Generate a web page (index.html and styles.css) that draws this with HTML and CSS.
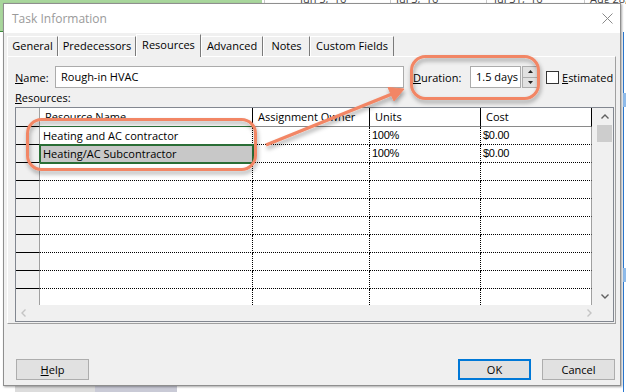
FILE: index.html
```html
<!DOCTYPE html>
<html lang="en">
<head>
    <meta charset="UTF-8">
    <meta name="viewport" content="width=device-width, initial-scale=1.0">
    <title>Task Information</title>
    <link rel="stylesheet" href="styles.css">
</head>
<body>
    <!-- Project window behind the dialog -->
    <div class="desk-green"></div>
    <div class="scale-line" style="left:264px"></div>
    <div class="scale-line" style="left:390px"></div>
    <div class="scale-line" style="left:486px"></div>
    <div class="scale-line" style="left:584px"></div>
    <span class="scale-date" style="left:300px">Jun 5, '16</span>
    <span class="scale-date" style="left:396px">Jul 3, '16</span>
    <span class="scale-date" style="left:494px">Jul 31, '16</span>
    <span class="scale-date" style="left:590px">Aug 28, '16</span>
    <div class="desk-blue"></div>
    <div class="desk-mark" style="top:93px"></div>
    <div class="desk-mark" style="top:268px"></div>
    <div class="desk-foot">
        <div class="foot-a"></div>
        <div class="foot-b"></div>
    </div>

    <div class="dialog">
        <div class="titlebar">
            <span class="title">Task Information</span>
            <svg class="close" width="11" height="11" viewBox="0 0 11 11">
                <path d="M0.5 0.5 L10.5 10.5 M10.5 0.5 L0.5 10.5" stroke="#8a8a8a" stroke-width="1" fill="none"/>
            </svg>
        </div>
        <div class="client">
            <div class="tabs">
                <div class="tab" style="width:51px">General</div>
                <div class="tab" style="width:78px">Predecessors</div>
                <div class="tab tab-on" style="width:65px">Resources</div>
                <div class="tab" style="width:62px">Advanced</div>
                <div class="tab" style="width:47px">Notes</div>
                <div class="tab" style="width:84px">Custom Fields</div>
            </div>
            <div class="panel">
                <div class="field-row">
                    <span class="lbl name-lbl"><u>N</u>ame:</span>
                    <div class="textbox name-box">Rough-in HVAC</div>
                    <span class="lbl dur-lbl"><u>D</u>uration:</span>
                    <div class="textbox dur-box">1.5 days</div>
                    <div class="spinner">
                        <div class="spin-btn">
                            <svg width="5" height="3" viewBox="0 0 5 3"><path d="M0 3 L2.5 0 L5 3 Z" fill="#222"/></svg>
                        </div>
                        <div class="spin-btn">
                            <svg width="5" height="3" viewBox="0 0 5 3"><path d="M0 0 L2.5 3 L5 0 Z" fill="#222"/></svg>
                        </div>
                    </div>
                    <div class="checkbox"></div>
                    <span class="lbl est-lbl"><u>E</u>stimated</span>
                </div>
                <div class="lbl res-lbl"><u>R</u>esources:</div>
                <div class="grid">
                    <div class="grid-main">
                        <div class="grid-view">
                            <div class="rh"></div>
                            <div class="hd hd-focus">Resource Name</div>
                            <div class="hd">Assignment Owner</div>
                            <div class="hd">Units</div>
                            <div class="hd">Cost</div>

                            <div class="rh"></div>
                            <div class="cell name">Heating and AC contractor</div>
                            <div class="cell"></div>
                            <div class="cell num">100%</div>
                            <div class="cell num last">$0.00</div>

                            <div class="rh"></div>
                            <div class="cell name sel">Heating/AC Subcontractor</div>
                            <div class="cell"></div>
                            <div class="cell num">100%</div>
                            <div class="cell num last">$0.00</div>

                            <div class="rh"></div><div class="cell"></div><div class="cell"></div><div class="cell"></div><div class="cell last"></div>
                            <div class="rh"></div><div class="cell"></div><div class="cell"></div><div class="cell"></div><div class="cell last"></div>
                            <div class="rh"></div><div class="cell"></div><div class="cell"></div><div class="cell"></div><div class="cell last"></div>
                            <div class="rh"></div><div class="cell"></div><div class="cell"></div><div class="cell"></div><div class="cell last"></div>
                            <div class="rh"></div><div class="cell"></div><div class="cell"></div><div class="cell"></div><div class="cell last"></div>
                            <div class="rh"></div><div class="cell"></div><div class="cell"></div><div class="cell"></div><div class="cell last"></div>
                            <div class="rh"></div><div class="cell"></div><div class="cell"></div><div class="cell"></div><div class="cell last"></div>
                            <div class="rh"></div><div class="cell"></div><div class="cell"></div><div class="cell"></div><div class="cell last"></div>
                        </div>
                        <div class="vscroll">
                            <div class="vbar">
                                <div class="vbtn">
                                    <svg width="8" height="5" viewBox="0 0 8 5"><path d="M0.5 4.5 L4 1 L7.5 4.5" stroke="#606060" stroke-width="1.4" fill="none"/></svg>
                                </div>
                                <div class="thumb"></div>
                                <div class="vbtn vbtn-down">
                                    <svg width="8" height="5" viewBox="0 0 8 5"><path d="M0.5 0.5 L4 4 L7.5 0.5" stroke="#606060" stroke-width="1.4" fill="none"/></svg>
                                </div>
                            </div>
                        </div>
                    </div>
                    <div class="hscroll">
                        <svg width="5" height="8" viewBox="0 0 5 8"><path d="M4.5 0.5 L1 4 L4.5 7.5" stroke="#c4c4c4" stroke-width="1.4" fill="none"/></svg>
                        <svg width="5" height="8" viewBox="0 0 5 8"><path d="M0.5 0.5 L4 4 L0.5 7.5" stroke="#c4c4c4" stroke-width="1.4" fill="none"/></svg>
                    </div>
                </div>
            </div>
            <div class="buttons">
                <div class="btn"><span><u>H</u>elp</span></div>
                <div class="spacer"></div>
                <div class="btn btn-default">OK</div>
                <div class="btn btn-cancel">Cancel</div>
            </div>
        </div>
    </div>

    <!-- Callout annotations drawn over the screenshot -->
    <svg class="callouts" width="626" height="392" viewBox="0 0 626 392">
        <defs>
            <filter id="drop" x="-20%" y="-30%" width="140%" height="170%">
                <feDropShadow dx="1" dy="3" stdDeviation="2" flood-color="#000" flood-opacity="0.35"/>
            </filter>
        </defs>
        <g filter="url(#drop)" stroke="#f28665" fill="none" stroke-width="3">
            <rect x="27.5" y="119.5" width="228" height="50" rx="14"/>
            <rect x="411.5" y="56.5" width="127" height="42" rx="14"/>
            <path d="M266 145 L392 94" stroke-width="3.5"/>
            <path d="M404 89 L388 87.5 L394 101 Z" fill="#f28665" stroke-width="1"/>
        </g>
    </svg>
</body>
</html>
```

FILE: styles.css
```css
* {
    box-sizing: border-box;
}

body {
    margin: 0;
    width: 626px;
    height: 392px;
    overflow: hidden;
    position: relative;
    background: #fff;
    font-family: "Open Sans", "Noto Sans", sans-serif;
    font-size: 11px;
    color: #000;
}

/* Backdrop: the project window */
.desk-green {
    position: absolute;
    left: 0;
    top: 0;
    width: 262px;
    height: 32px;
    background: #a8d69c;
    border-bottom: 1px solid #3d8a3d;
}

.scale-line {
    position: absolute;
    top: 0;
    width: 1px;
    height: 6px;
    background: #c8c8c8;
}

.scale-date {
    position: absolute;
    top: -9px;
    font-size: 11px;
    color: #444;
    white-space: nowrap;
}

.desk-blue {
    position: absolute;
    left: 623px;
    top: 32px;
    width: 1px;
    height: 360px;
    background: #2b78d0;
}

.desk-mark {
    position: absolute;
    left: 623px;
    width: 3px;
    height: 14px;
    background: #8fbbea;
}

.desk-foot {
    position: absolute;
    left: 0;
    top: 386px;
    width: 626px;
    height: 6px;
    display: flex;
    padding-left: 15px;
}

.foot-a {
    width: 80px;
    background: #dcdcdc;
}

.foot-b {
    width: 82px;
    background: #c9cad6;
}

/* Dialog window */
.dialog {
    position: absolute;
    left: 3px;
    top: 3px;
    width: 618px;
    height: 383px;
    border: 1px solid #8f8f8f;
    background: #f0f0f0;
    box-shadow: 1px 1px 2px rgba(0, 0, 0, 0.35);
    display: flex;
    flex-direction: column;
}

.titlebar {
    height: 29px;
    background: #fff;
    display: flex;
    align-items: center;
    justify-content: space-between;
    padding: 0 7px 0 8px;
}

.title {
    font-size: 12px;
    color: #9a9a9a;
}

.close {
    display: block;
}

.client {
    flex: 1;
    display: flex;
    flex-direction: column;
    padding: 1px 4px 5px 3px;
}

/* Tabs */
.tabs {
    display: flex;
    align-items: flex-end;
    height: 22px;
    position: relative;
    z-index: 1;
}

.tab {
    height: 20px;
    line-height: 18px;
    text-align: center;
    white-space: nowrap;
    border-top: 1px solid #fff;
    border-left: 1px solid #fff;
    border-right: 1px solid #7a7a7a;
    background: #f0f0f0;
}

.tab-on {
    height: 23px;
    line-height: 20px;
    margin-bottom: -1px;
    background: #f0f0f0;
}

.panel {
    height: 268px;
    border: 1px solid;
    border-color: #fff #a0a0a0 #a0a0a0 #fff;
    padding: 9px 1px 1px 7px;
}

/* Name / duration row */
.field-row {
    display: flex;
    align-items: center;
    height: 22px;
}

.lbl u {
    text-decoration: underline;
}

.name-lbl {
    width: 40px;
}

.textbox {
    height: 22px;
    line-height: 20px;
    background: #fff;
    border: 1px solid #ababab;
    padding-left: 5px;
    white-space: nowrap;
}

.name-box {
    width: 349px;
}

.dur-lbl {
    width: 57px;
    margin-left: 9px;
}

.dur-box {
    width: 51px;
}

.spinner {
    width: 16px;
    height: 22px;
    display: flex;
    flex-direction: column;
    margin-left: 1px;
}

.spin-btn {
    flex: 1;
    background: #e1e1e1;
    border: 1px solid #adadad;
    display: flex;
    align-items: center;
    justify-content: center;
}

.spin-btn + .spin-btn {
    border-top: none;
}

.spin-btn svg {
    display: block;
}

.checkbox {
    width: 13px;
    height: 13px;
    margin-left: 8px;
    border: 1px solid #333;
    background: #fff;
}

.est-lbl {
    margin-left: 3px;
}

.res-lbl {
    height: 19px;
    line-height: 19px;
}

/* Resource grid */
.grid {
    width: 599px;
    height: 215px;
    border: 1px solid #828790;
    background: #fff;
    display: flex;
    flex-direction: column;
}

.grid-main {
    display: flex;
    height: 197px;
}

.grid-view {
    width: 576px;
    height: 197px;
    overflow: hidden;
    display: grid;
    grid-template-columns: 24px 213px 117px 111px 111px;
    grid-template-rows: 19px;
    grid-auto-rows: 18px;
    align-content: start;
}

.rh {
    background: #f0f0f0;
    border-right: 1px solid #a0a0a0;
    border-bottom: 1px solid #000;
}

.hd {
    border-right: 1px solid #000;
    border-bottom: 1px solid #8a8a8a;
    padding-left: 5px;
    line-height: 18px;
    white-space: nowrap;
    overflow: hidden;
}

.hd-focus {
    border-bottom-color: #2a6e36;
}

.cell {
    border-right: 1px dotted #000;
    border-bottom: 1px dotted #000;
    padding-left: 2px;
    line-height: 17px;
    white-space: nowrap;
    overflow: hidden;
}

.cell.last {
    border-right: 1px solid #a0a0a0;
}

.cell.name {
    padding-left: 3px;
}

.cell.num {
    font-family: "Liberation Sans", Arial, sans-serif;
    font-size: 11px;
    letter-spacing: -0.3px;
}

.cell.sel {
    background: #c8c8c8;
    outline: 2px solid #2a6e36;
    outline-offset: -1px;
}

.vscroll {
    width: 21px;
    background: #f0f0f0;
    padding-left: 4px;
}

.vbar {
    width: 17px;
    height: 100%;
    display: flex;
    flex-direction: column;
    align-items: center;
}

.vbtn {
    height: 17px;
    width: 100%;
    display: flex;
    align-items: center;
    justify-content: center;
}

.vbtn svg {
    display: block;
}

.thumb {
    width: 15px;
    height: 17px;
    background: #cdcdcd;
}

.vbtn-down {
    margin-top: auto;
}

.hscroll {
    height: 16px;
    background: #f0f0f0;
    display: flex;
    align-items: center;
    justify-content: space-between;
    padding: 0 21px 0 5px;
}

.hscroll svg {
    display: block;
}

/* Dialog buttons */
.buttons {
    margin-top: auto;
    display: flex;
    padding: 0 1px 0 9px;
}

.spacer {
    flex: 1;
}

.btn {
    width: 73px;
    height: 21px;
    line-height: 19px;
    text-align: center;
    background: #e1e1e1;
    border: 1px solid #adadad;
}

.btn-default {
    border: 2px solid #0078d7;
    line-height: 17px;
}

.btn-cancel {
    margin-left: 11px;
}

/* Annotation layer */
.callouts {
    position: absolute;
    left: 0;
    top: 0;
    pointer-events: none;
}
```
